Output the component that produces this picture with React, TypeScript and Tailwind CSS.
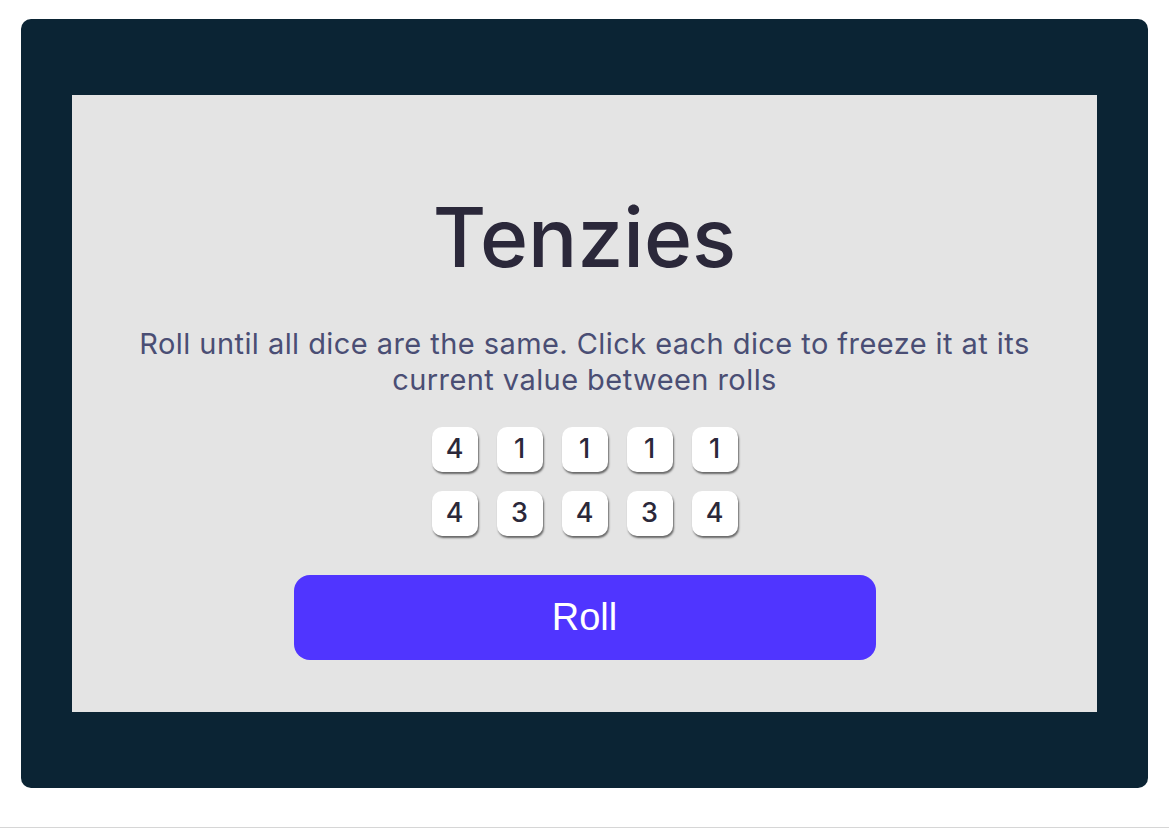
import { useState } from 'react';

type Die = { id: number; value: number; held: boolean };

const START = [4, 1, 1, 1, 1, 4, 3, 4, 3, 4];

export default function App() {
  const [dice, setDice] = useState<Die[]>(
    START.map((value, id) => ({ id, value, held: false })),
  );

  const roll = () =>
    setDice((prev) =>
      prev.map((d) => (d.held ? d : { ...d, value: Math.ceil(Math.random() * 6) })),
    );

  const hold = (id: number) =>
    setDice((prev) => prev.map((d) => (d.id === id ? { ...d, held: !d.held } : d)));

  return (
    <div className="box-border h-[828px] border-b border-[#d6d6d6] bg-white px-[21px] pt-[19px] font-['Inter',sans-serif]">
      <main className="box-border h-[769px] rounded-[10px] bg-[#0b2434] px-[51px] py-[76px]">
        <section className="flex h-full flex-col items-center bg-[#e4e4e4] pt-[102px]">
          <h1 className="text-[82px] leading-none font-medium text-[#2b283a]">
            Tenzies
          </h1>
          <p className="mt-[47px] w-[920px] text-center text-[29px] leading-[36px] tracking-[0.015em] text-[#4a4e74]">
            Roll until all dice are the same. Click each dice to freeze it at its current value between rolls
          </p>

          {/* Dice grid */}
          <div className="mt-[29px] grid grid-cols-5 gap-[19px]">
            {dice.map((d) => (
              <button
                key={d.id}
                onClick={() => hold(d.id)}
                className={`flex h-[45px] w-[46px] items-center justify-center rounded-[10px] text-[27px] font-medium text-[#2b283a] shadow-[1px_2px_2px_rgba(0,0,0,0.55)] ${
                  d.held ? 'bg-[#59e391]' : 'bg-white'
                }`}
              >
                {d.value}
              </button>
            ))}
          </div>

          <button
            onClick={roll}
            className="mt-[39px] h-[85px] w-[582px] rounded-[16px] bg-[#5035ff] font-['Liberation_Sans',Arial,sans-serif] text-[38px] text-white"
          >
            Roll
          </button>
        </section>
      </main>
    </div>
  );
}
